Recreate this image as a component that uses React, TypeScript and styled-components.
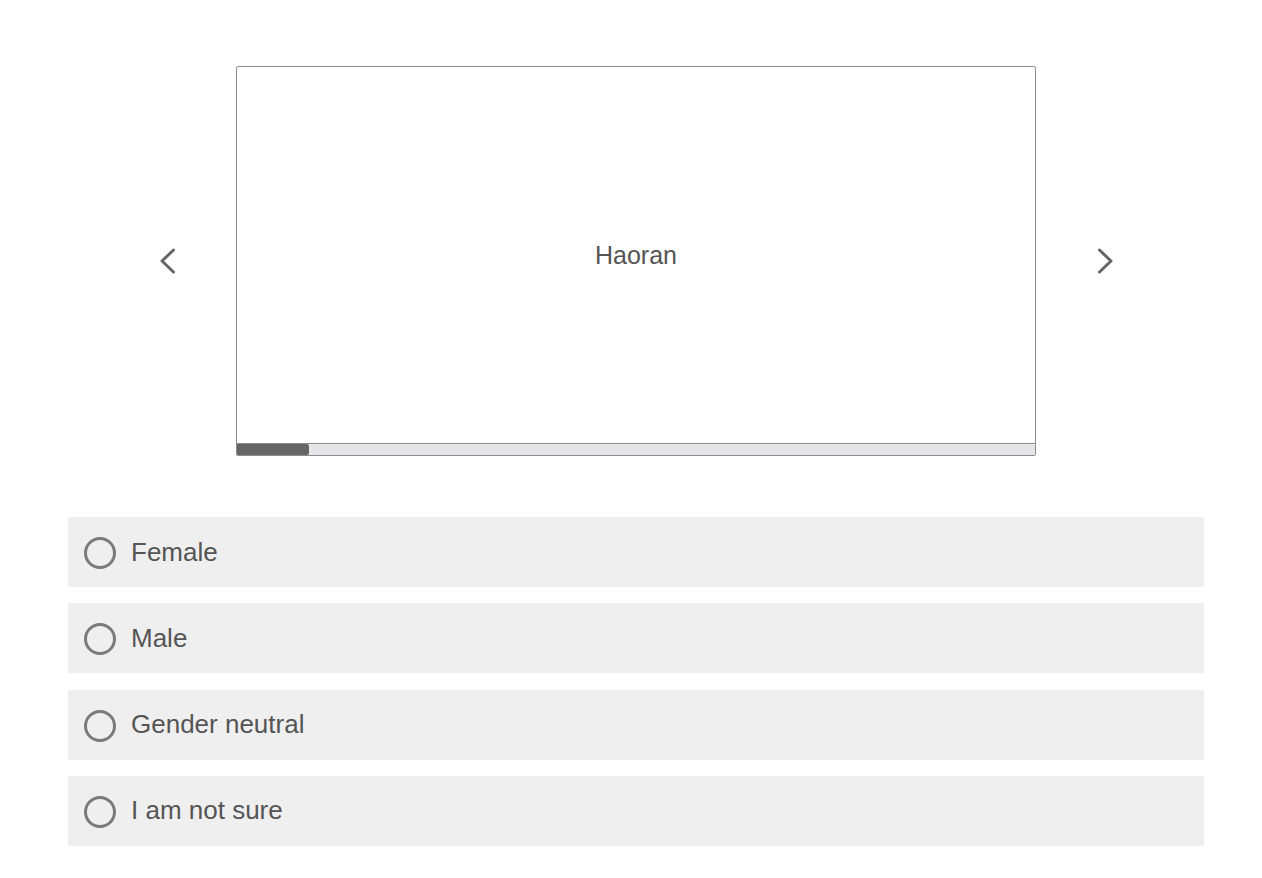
import React from "react";
import styled, { createGlobalStyle } from "styled-components";

const Global = createGlobalStyle`
  html, body { margin: 0; padding: 0; background: #ffffff; }
  body { font-family: "Liberation Sans", Arial, sans-serif; }
`;

const Page = styled.div`
  padding: 66px 0 0 68px;
  width: 1136px;
  display: flex;
  flex-direction: column;
`;

const Carousel = styled.div`
  display: flex;
  align-items: center;
  justify-content: center;
  gap: 49px;
`;

const Arrow = styled.button`
  width: 40px;
  height: 40px;
  border: none;
  background: transparent;
  padding: 0;
  display: flex;
  align-items: center;
  justify-content: center;
  cursor: pointer;
`;

const Card = styled.div`
  width: 798px;
  height: 388px;
  border: 1px solid #8c8c8c;
  border-radius: 2px;
  background: #ffffff;
  display: flex;
  flex-direction: column;
  overflow: hidden;
`;

const Stage = styled.div`
  flex: 1;
  display: flex;
  align-items: center;
  justify-content: center;
  font-size: 25px;
  color: #555555;
`;

const Track = styled.div`
  height: 11px;
  border-top: 1px solid #8c8c8c;
  background: #e6e5ea;
  display: flex;
`;

const Fill = styled.div`
  height: 100%;
  background: #666666;
  border-radius: 0 2px 2px 0;
`;

const Options = styled.div`
  margin-top: 61px;
  display: flex;
  flex-direction: column;
  gap: 16.3px;
`;

const Option = styled.label`
  height: 70px;
  background: #efefef;
  display: flex;
  align-items: center;
  padding-left: 16px;
  gap: 15px;
  cursor: pointer;
`;

const Radio = styled.span`
  width: 26px;
  height: 26px;
  border: 3px solid #7a7a7a;
  border-radius: 50%;
  margin-top: 2px;
`;

const Label = styled.span`
  font-size: 26px;
  color: #555555;
`;

const Chevron = ({ dir }: { dir: "left" | "right" }) => (
  <svg width="17" height="26" viewBox="0 0 17 26">
    <path
      d={dir === "left" ? "M14.5 2 L3 13 L14.5 24" : "M2.5 2 L14 13 L2.5 24"}
      fill="none"
      stroke="#666666"
      strokeWidth="3"
      strokeLinecap="round"
      strokeLinejoin="round"
    />
  </svg>
);

const options = ["Female", "Male", "Gender neutral", "I am not sure"];

export default function App() {
  const progress = 9;
  return (
    <>
      <Global />
      <Page>
        <Carousel>
          <Arrow aria-label="previous">
            <Chevron dir="left" />
          </Arrow>
          <Card>
            <Stage>Haoran</Stage>
            <Track>
              <Fill style={{ width: `${progress}%` }} />
            </Track>
          </Card>
          <Arrow aria-label="next">
            <Chevron dir="right" />
          </Arrow>
        </Carousel>
        <Options>
          {options.map((o) => (
            <Option key={o}>
              <Radio />
              <Label>{o}</Label>
            </Option>
          ))}
        </Options>
      </Page>
    </>
  );
}
